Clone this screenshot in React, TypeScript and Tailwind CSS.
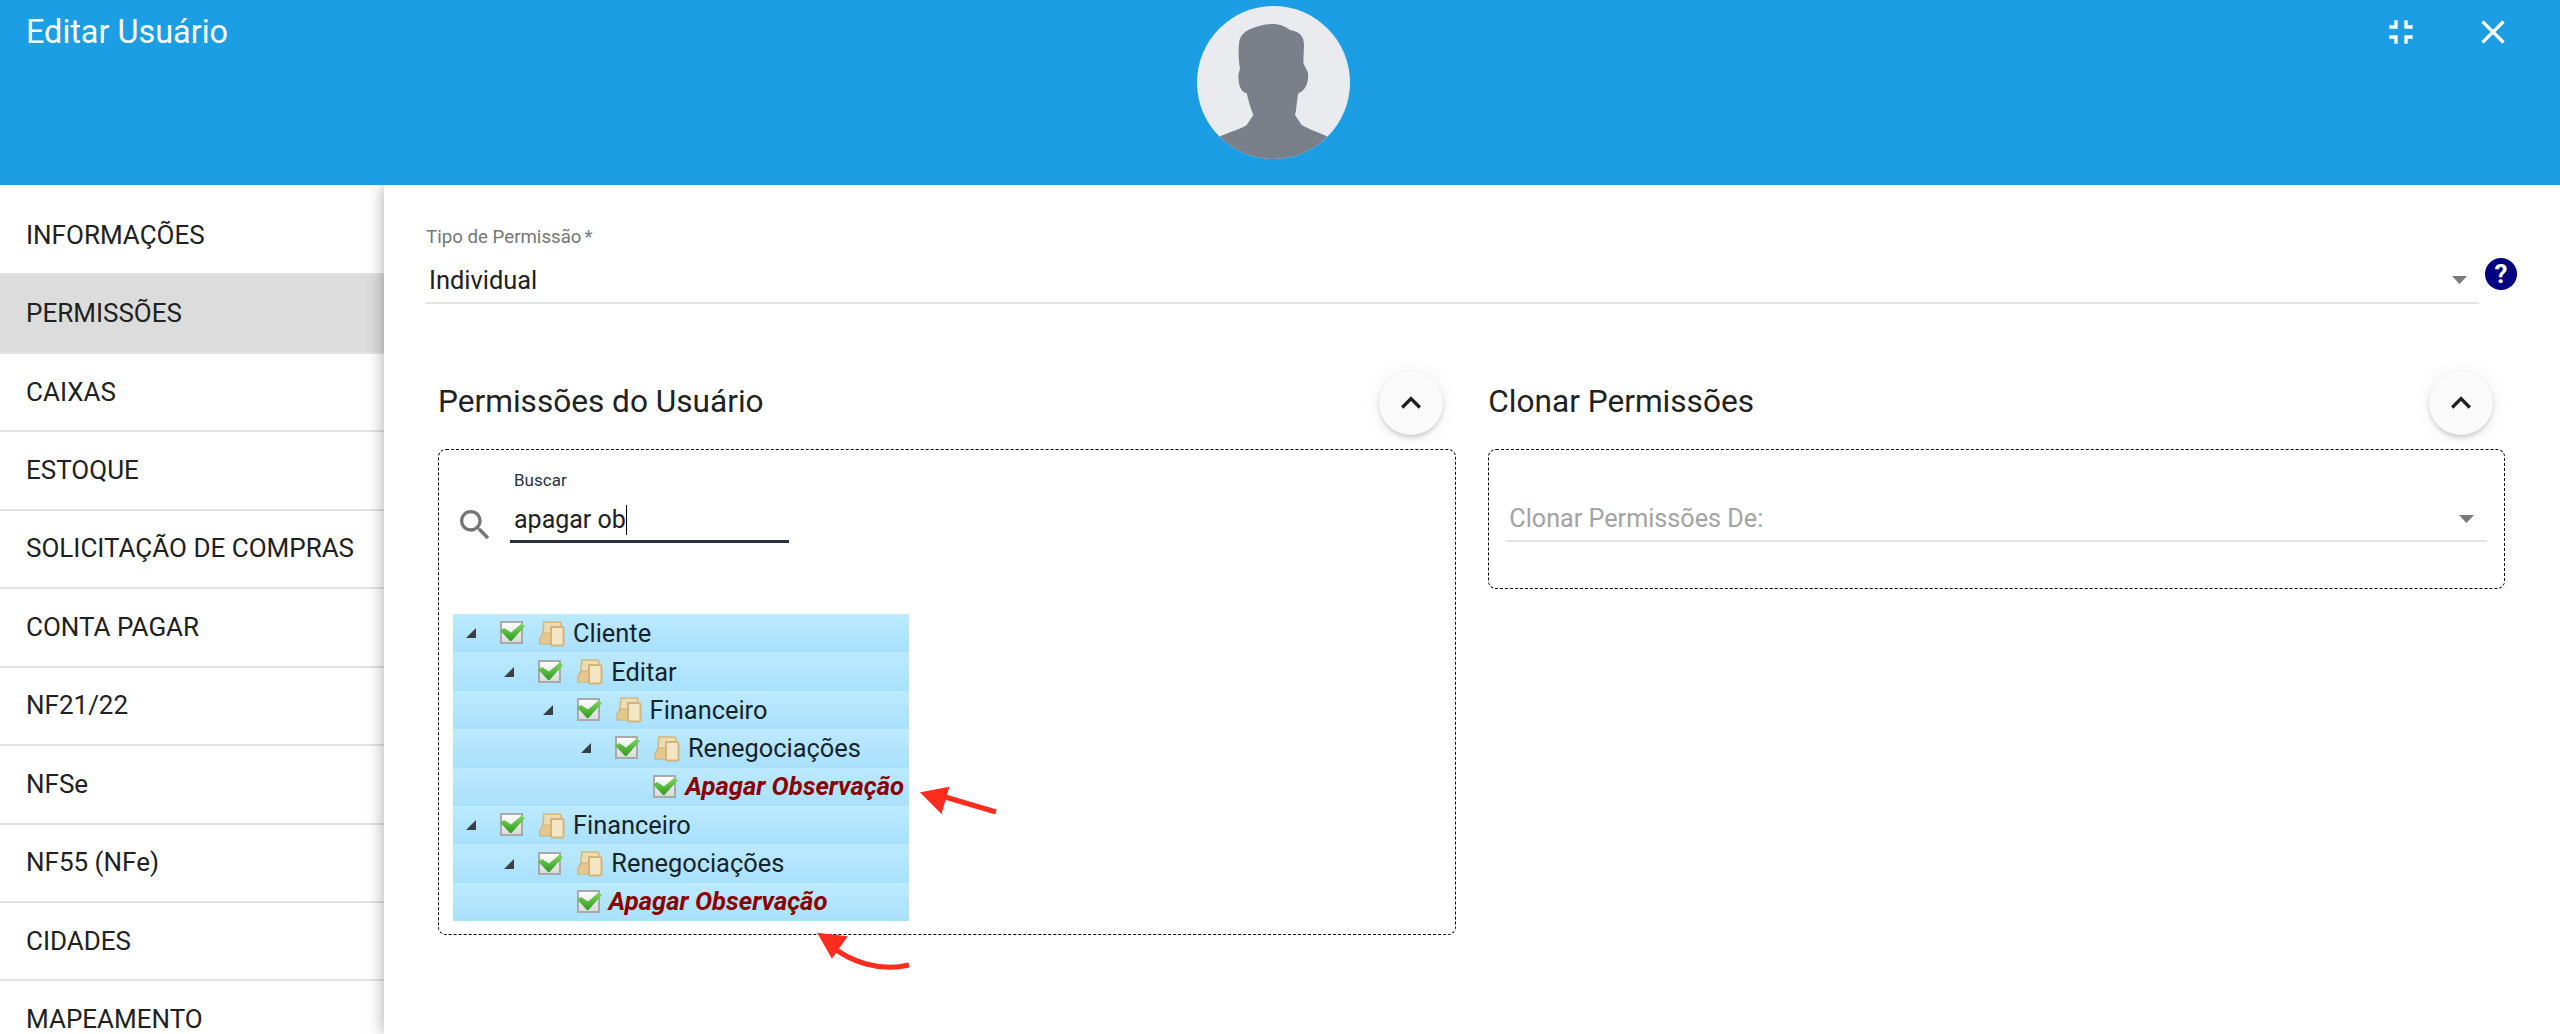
import React from "react";

const MENU = ["INFORMAÇÕES","PERMISSÕES","CAIXAS","ESTOQUE","SOLICITAÇÃO DE COMPRAS","CONTA PAGAR","NF21/22","NFSe","NF55 (NFe)","CIDADES","MAPEAMENTO"];

const TREE: { level: number; label: string; leaf?: boolean }[] = [
  { level: 0, label: "Cliente" },
  { level: 1, label: "Editar" },
  { level: 2, label: "Financeiro" },
  { level: 3, label: "Renegociações" },
  { level: 4, label: "Apagar Observação", leaf: true },
  { level: 0, label: "Financeiro" },
  { level: 1, label: "Renegociações" },
  { level: 2, label: "Apagar Observação", leaf: true },
];

function Check() {
  return (
    <svg width="26" height="24" viewBox="0 0 26 24" className="shrink-0 mr-[13px]">
      <defs>
        <linearGradient id="cb" x1="0" y1="0" x2="0" y2="1">
          <stop offset="0" stopColor="#ffffff" />
          <stop offset="1" stopColor="#d8d8d8" />
        </linearGradient>
        <linearGradient id="ck" x1="0" y1="0" x2="0" y2="1">
          <stop offset="0" stopColor="#7ad85a" />
          <stop offset="1" stopColor="#2f9a22" />
        </linearGradient>
      </defs>
      <rect x="1" y="1" width="21" height="21" fill="url(#cb)" stroke="#a9a9a9" strokeWidth="2" />
      <path d="M0 9.5 L4 7 L11 11.5 L21 3 L25 5 L11.5 20 L10 20 Z" fill="url(#ck)" />
    </svg>
  );
}

function Folder() {
  return (
    <svg width="26" height="27" viewBox="0 0 26 27" className="shrink-0 mr-[8px]">
      <path d="M5 2 H20 Q22 2 22 4 V20 H3 Z" fill="#ecdcb2" stroke="#d3b67c" strokeWidth="1.5" />
      <path d="M4 13 H12 V24 H1 V18 Q3 16 4 13 Z" fill="#e5c88f" stroke="#cfb075" strokeWidth="1.2" />
      <path d="M12 7 H23 Q24.5 7 24.5 9 V24 Q24.5 25.5 23 25.5 H13 Q12 25.5 12 24 Z" fill="#f3e6c6" stroke="#d5b478" strokeWidth="2" />
    </svg>
  );
}

function Tri() {
  return (
    <svg width="10" height="10" viewBox="0 0 10 10" className="shrink-0 mr-[24px]">
      <path d="M10 0 V10 H0 Z" fill="#3a3f45" />
    </svg>
  );
}

function Caret() {
  return (
    <svg width="16" height="8" viewBox="0 0 16 8" className="shrink-0">
      <path d="M0 0 H15 L7.5 8 Z" fill="#7a7a7a" />
    </svg>
  );
}

function Fab() {
  return (
    <button className="w-16 h-16 rounded-full bg-[#fafafa] flex items-center justify-center shadow-[0_3px_5px_-1px_rgba(0,0,0,0.2),0_1px_18px_0_rgba(0,0,0,0.08)]">
      <svg width="40" height="40" viewBox="0 0 24 24">
        <path d="M12 8l-6 6 1.41 1.41L12 10.83l4.59 4.58L18 14z" fill="#212121" />
      </svg>
    </button>
  );
}

export default function App() {
  return (
    <div className="relative h-[1034px] overflow-hidden bg-white font-['Roboto',sans-serif] text-[#212121] flex flex-col">
      <header className="relative z-10 h-[185px] shrink-0 bg-[#1b9ee3] grid grid-cols-[1fr_153px_1fr] pl-[26px] pr-[40px]">
        <div className="text-white text-[32.4px] leading-[36px] pt-[14px]">Editar Usuário</div>
        <div className="w-[153px] h-[153px] mt-[6px] rounded-full overflow-hidden bg-[#e9ebef]">
          <svg viewBox="291 18 459 459" width="153" height="153">
            <path
              d="M417 130 C420 100 440 90 470 80 C500 70 540 65 570 90 C600 95 612 110 612 135 L610 190 L623 215 C628 240 620 270 595 280 C590 300 590 330 585 345 L605 375 C640 395 680 405 700 420 L700 500 L340 500 L340 420 C370 400 420 390 440 375 L460 345 C450 320 445 300 440 280 C420 275 415 250 415 225 L420 205 C415 180 415 150 417 130 Z"
              fill="#7a8089"
            />
          </svg>
        </div>
        <div className="flex justify-end items-start gap-[52px] pt-[12px] pr-[7px]">
          <svg width="40" height="40" viewBox="0 0 24 24" fill="#fff">
            <path d="M5 16h3v3h2v-5H5v2zm3-8H5v2h5V5H8v3zm6 11h2v-3h3v-2h-5v5zm2-11V5h-2v5h5V8h-3z" />
          </svg>
          <svg width="40" height="40" viewBox="0 0 24 24" fill="#fff">
            <path d="M19 6.41L17.59 5 12 10.59 6.41 5 5 6.41 10.59 12 5 17.59 6.41 19 12 13.41 17.59 19 19 17.59 13.41 12z" />
          </svg>
        </div>
      </header>

      <div className="flex flex-1 min-h-0">
        <aside className="w-[384px] shrink-0 pt-[12px]">
          {MENU.map((m) => (
            <div
              key={m}
              className={`h-[78.45px] flex items-center pl-[26px] text-[26px] border-b-2 border-[#e2e2e2] ${m === "PERMISSÕES" ? "bg-[#dcdcdc]" : ""}`}
            >
              {m}
            </div>
          ))}
        </aside>

        <main className="relative flex-1 pl-[42px] pr-[54.5px] pt-[40px] bg-white shadow-[0_0_16px_rgba(0,0,0,0.35)]">
          <div className="flex items-start -mr-[11.5px]">
            <div className="flex-1">
              <div className="text-[18.7px] leading-[24px] text-[#767676]">Tipo de Permissão<span className="ml-[3px]">*</span></div>
              <div className="h-[55px] flex items-end justify-between border-b-2 border-[#e3e3e3] pl-[3px] pr-[11px] pb-[7px]">
                <span className="text-[25.4px] leading-[30px] text-[#212121]">Individual</span>
                <span className="pb-[11px]"><Caret /></span>
              </div>
            </div>
            <div className="pl-[6px] pt-[33px]">
              <svg width="32" height="32" viewBox="0 0 32 32" className="block">
                <circle cx="16" cy="16" r="16" fill="#000080" />
                <text x="16" y="25" textAnchor="middle" fill="#fff" fontSize="26" fontWeight="700" fontFamily="Roboto, sans-serif">?</text>
              </svg>
            </div>
          </div>

          <div className="grid grid-cols-[1018.25px_1017px] gap-[32px] mt-[67px] pl-[12px]">
            <section>
              <div className="h-16 flex items-center justify-between pr-[13px] mb-[14px]">
                <h2 className="text-[31.6px] leading-[40px] -mt-[2px] text-[#212121]">Permissões do Usuário</h2>
                <Fab />
              </div>
              <div className="h-[486px] border border-dashed border-black rounded-lg pl-[14px]">
                <div className="flex items-end h-[93px]">
                  <svg width="40" height="40" viewBox="0 0 24 24" fill="#757575" className="ml-[2px] mb-[-2px]">
                    <path d="M15.5 14h-.79l-.28-.27C15.41 12.59 16 11.11 16 9.5 16 5.91 13.09 3 9.5 3S3 5.91 3 9.5 5.91 16 9.5 16c1.61 0 3.09-.59 4.23-1.57l.27.28v.79l5 4.99L20.49 19l-4.99-5zm-6 0C7.01 14 5 11.99 5 9.5S7.01 5 9.5 5 14 7.01 14 9.5 11.99 14 9.5 14z" />
                  </svg>
                  <div className="ml-[14.5px] w-[279px] border-b-[3px] border-[#2b3040] pl-[4.5px]">
                    <div className="text-[17px] leading-[22px] text-[#2b3040] mb-[9px]">Buscar</div>
                    <div className="text-[25px] leading-[40px] text-[#212121] flex items-center">
                      apagar ob<span className="inline-block w-px h-[30px] bg-black" />
                    </div>
                  </div>
                </div>
                <div className="w-[456px] mt-[71px]">
                  {TREE.map((r, i) => (
                    <div
                      key={i}
                      className="h-[38.4px] flex items-center bg-gradient-to-b from-[#bceaff] to-[#a9e0fb]"
                      style={{ paddingLeft: 13 + r.level * 38.3 }}
                    >
                      {r.leaf ? <span className="w-[34px] shrink-0" /> : <Tri />}
                      <Check />
                      {r.leaf ? null : <Folder />}
                      <span
                        className={r.leaf ? "text-[25.6px] leading-[30px] -mt-[1px] font-bold italic text-[#8b0000] -ml-[7px] whitespace-nowrap" : "text-[25.4px] text-[#17232b] whitespace-nowrap"}
                      >
                        {r.label}
                      </span>
                    </div>
                  ))}
                </div>
              </div>
            </section>
            <section>
              <div className="h-16 flex items-center justify-between pr-[12.5px] mb-[14px]">
                <h2 className="text-[31.6px] leading-[40px] -mt-[2px] text-[#212121]">Clonar Permissões</h2>
                <Fab />
              </div>
              <div className="h-[140px] border border-dashed border-black rounded-lg px-[17px] pt-[47px]">
                <div className="h-[45px] flex items-center justify-between border-b-2 border-[#e3e3e3] pl-[3px] pr-[12px]">
                  <span className="text-[25.2px] text-[#a3a3a3]">Clonar Permissões De:</span>
                  <Caret />
                </div>
              </div>
            </section>
          </div>
        </main>
      </div>

      <svg className="absolute left-0 top-0 z-20 pointer-events-none" width="2560" height="1034" fill="none">
        <path d="M996 812 L935 794" stroke="#ff2d1e" strokeWidth="5" />
        <path d="M922 793 L948 788 L941 812 Z" fill="#ff2d1e" stroke="#ff2d1e" strokeWidth="2" />
        <path d="M909 965 C880 972 850 962 830 945" stroke="#ff2d1e" strokeWidth="5" />
        <path d="M819 934 L846 937 L832 957 Z" fill="#ff2d1e" stroke="#ff2d1e" strokeWidth="2" />
      </svg>
    </div>
  );
}
